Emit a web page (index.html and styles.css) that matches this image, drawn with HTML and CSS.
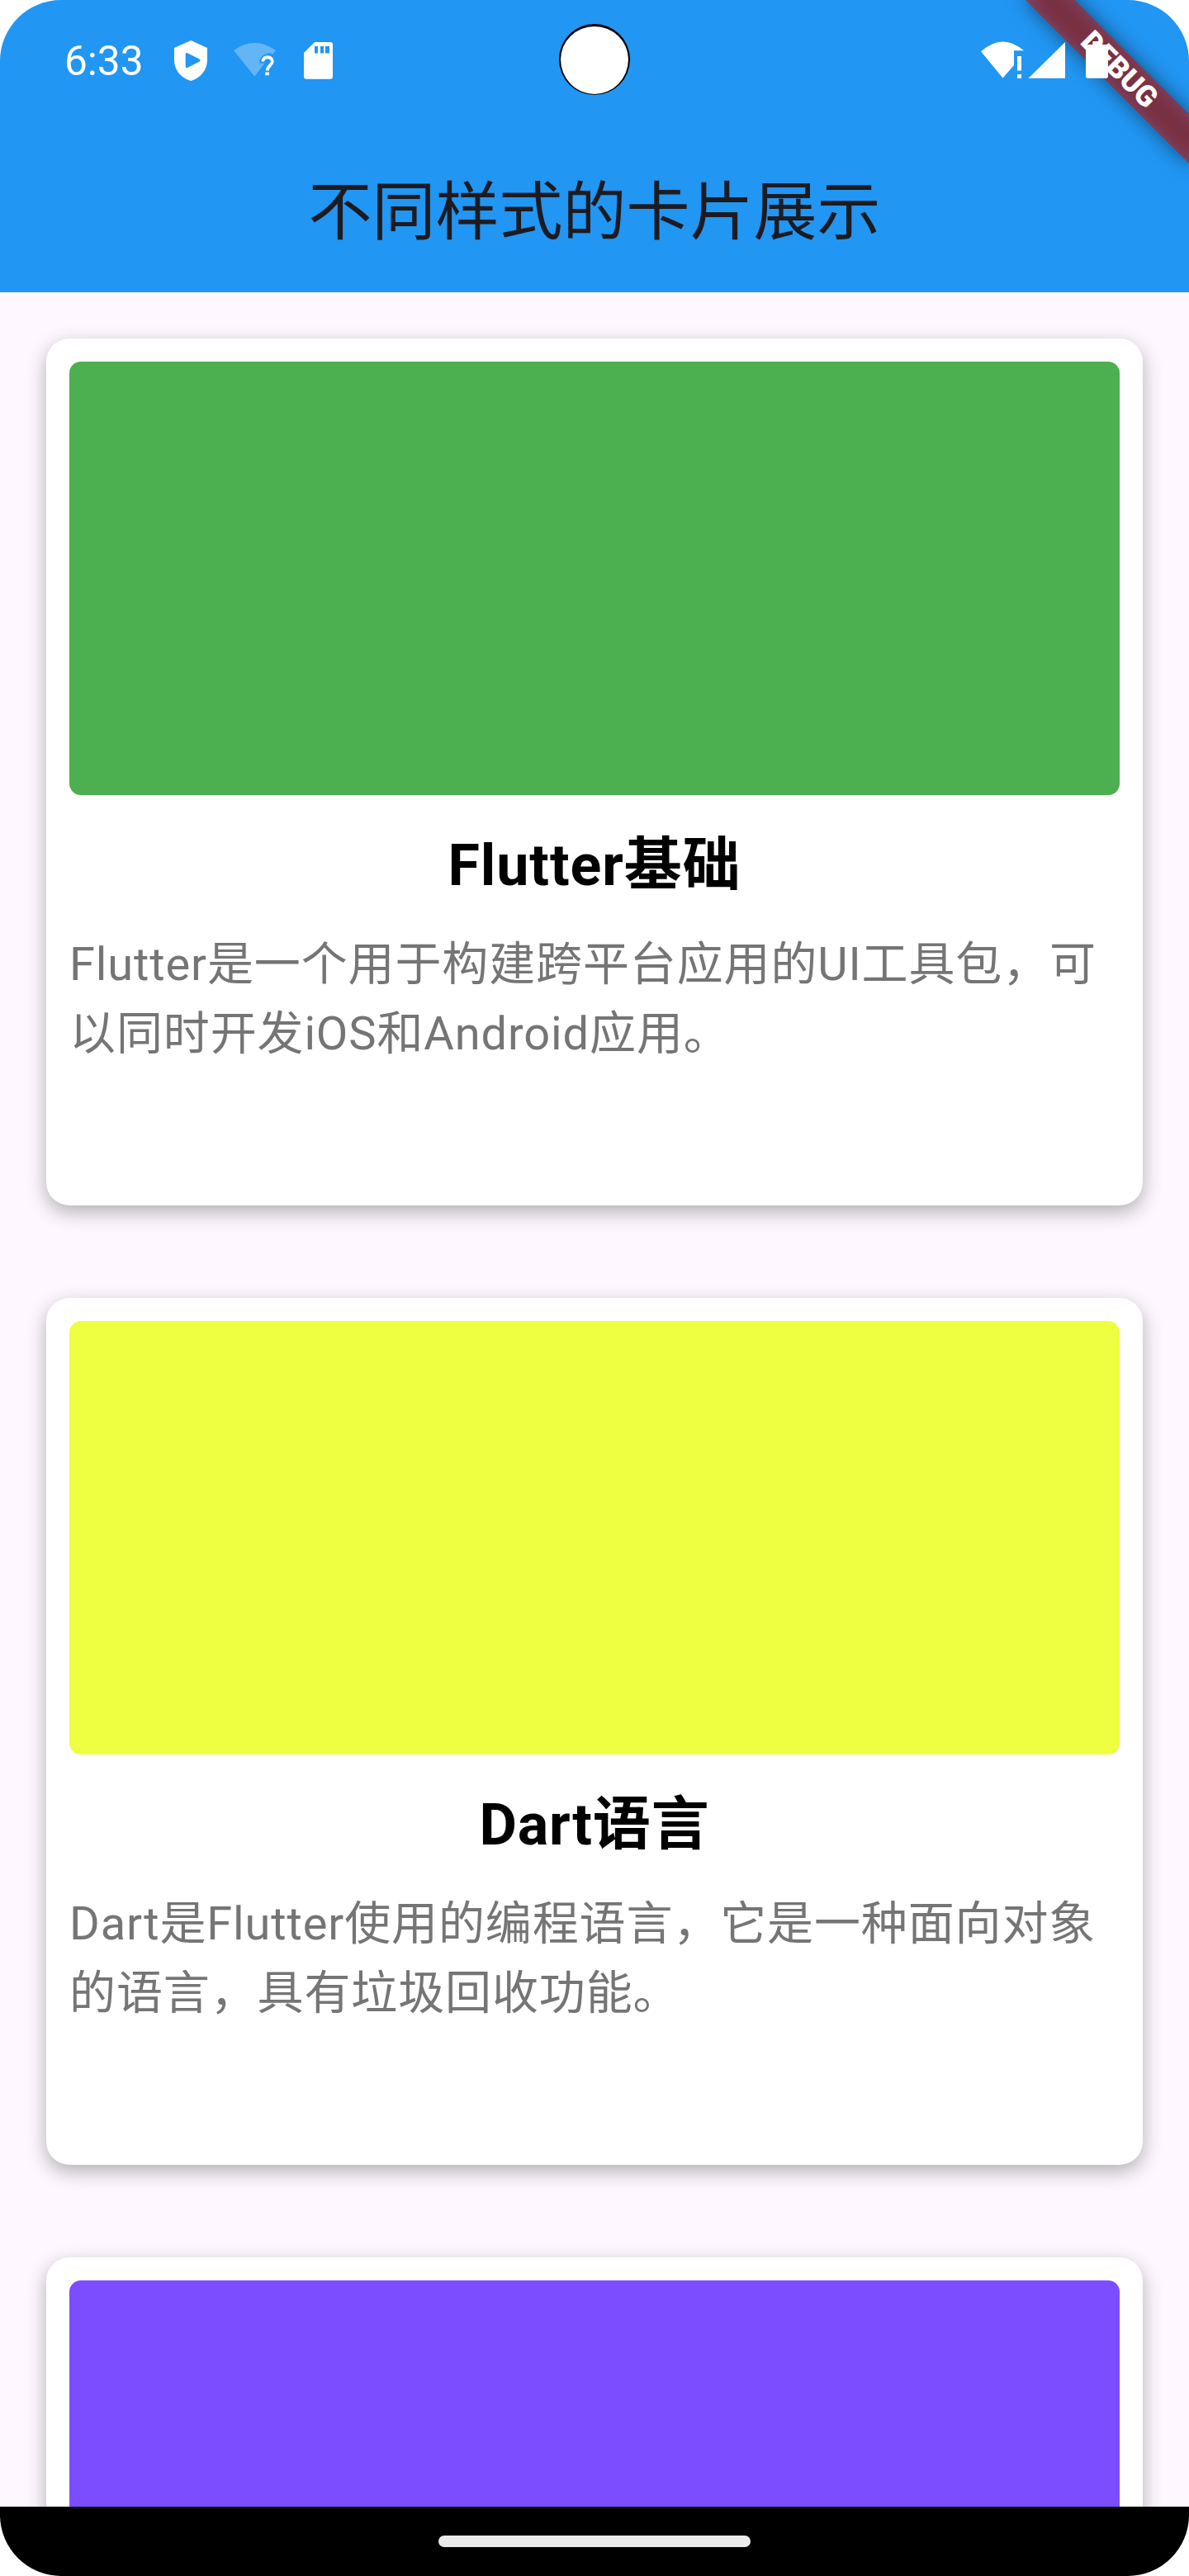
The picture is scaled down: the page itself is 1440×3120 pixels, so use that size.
FILE: index.html
```
<!DOCTYPE html>
<html lang="zh-CN">
<head>
<meta charset="utf-8">
<title>不同样式的卡片展示</title>
<link rel="stylesheet" href="styles.css">
</head>
<body>
<div class="screen">
  <header class="app-bar">
    <div class="status-bar">
      <span class="clock">6:33</span>
      <svg class="status-icons" width="206" height="64" viewBox="204 40 206 64">
        <path fill="#fff" fill-rule="evenodd" d="M231.3 49L251 58V73C251 85 242 95 231.3 98C220 95 211 85 211 73V58ZM227 64.3Q224.700 63.500 224.700 66V80Q224.700 83 227.500 81.800L241.800 74.600Q243.500 73.200 241.800 71.800Z"/>
        <path fill="#fff" fill-opacity=".3" d="M283 61Q308.500 43 334 61L330.500 65.500C323 62 314 68 314 76.500H320.500L308.300 92.500Z"/>
        <path fill="none" stroke="#fff" stroke-width="3.800" d="M318.300 74.500C318.300 67.500 329.800 67.500 329.800 74.500C329.800 79 323.700 79.500 323.700 85.500"/>
        <path fill="#fff" d="M321.300 87.500h4.500v3.700h-4.500z"/>
        <path fill="#fff" fill-rule="evenodd" d="M381 51H400Q403 51 403 54V92.500Q403 95.700 400 95.700H371Q368 95.700 368 92.500V64ZM381 56V64.500H385V56ZM388 56V64.500H392V56ZM394 56V64.500H399V56Z"/>
      </svg>
      <svg class="status-icons system-icons" width="160" height="64" viewBox="1184 40 160 64">
        <path fill="#fff" d="M1188 62.300Q1214 39 1240 61.300H1228V79L1214.500 94.500Z"/>
        <path fill="#fff" d="M1232 68h5v17.500h-5zM1232 90h5v4.800h-5zM1290 51V94.800H1245.500Z"/>
        <path fill="#fff" d="M1323.300 50H1333.500V54H1340Q1342 54 1342 56V92.500Q1342 94.800 1339.700 94.800H1317.300Q1315 94.800 1315 92.500V56Q1315 54 1317 54H1323.300Z"/>
      </svg>
    </div>
    <h1 class="app-title">不同样式的卡片展示</h1>
  </header>
  <main class="card-list">
    <article class="card">
      <div class="cover cover-green"></div>
      <h2 class="card-title">Flutter基础</h2>
      <p class="card-text">Flutter是一个用于构建跨平台应用的UI工具包，可以同时开发iOS和Android应用。</p>
    </article>
    <article class="card">
      <div class="cover cover-lime"></div>
      <h2 class="card-title">Dart语言</h2>
      <p class="card-text">Dart是Flutter使用的编程语言，它是一种面向对象的语言，具有垃圾回收功能。</p>
    </article>
    <article class="card">
      <div class="cover cover-purple"></div>
    </article>
  </main>
  <footer class="nav-bar"><div class="nav-pill"></div></footer>
  <div class="camera"></div>
  <div class="debug-banner"><span class="debug-label">DEBUG</span></div>
</div>
</body>
</html>
```
FILE: styles.css
```
* { box-sizing: border-box; }
body {
  margin: 0;
  background: #fff;
  font-family: Roboto, "Noto Sans CJK SC", sans-serif;
}
.screen {
  position: relative;
  display: flex;
  flex-direction: column;
  width: 1440px;
  height: 3120px;
  overflow: hidden;
  border-radius: 74px;
  background: #fef7ff;
}
.app-bar {
  flex: none;
  height: 354px;
  background: #2196f3;
}
.status-bar {
  display: flex;
  align-items: flex-start;
  height: 158px;
  padding: 40px 96px 0 78px;
}
.clock {
  width: 126px;
  padding-top: 5px;
  font-size: 49.5px;
  line-height: 58px;
  color: #fff;
}
/* System icons stay above the debug banner. */
.status-icons {
  position: relative;
  z-index: 2;
  flex: none;
}
.system-icons { margin-left: auto; }
.app-title {
  margin: 0;
  padding-top: 2px;
  font-size: 77px;
  font-weight: 400;
  line-height: 194px;
  padding-top: 3px;
  height: 196px;
  text-align: center;
  color: #1d1b20;
}
.card-list {
  flex: 1;
  min-height: 0;
  display: flex;
  flex-direction: column;
  gap: 112px;
  padding: 56px 56px 0;
  overflow: hidden;
}
.card {
  flex: none;
  height: 1050px;
  padding: 28px;
  border-radius: 28px;
  background: #fff;
  box-shadow: 0 8px 23px rgba(0, 0, 0, .3);
}
.cover {
  height: 525px;
  border-radius: 14px;
}
.cover-green { background: #4caf50; }
.cover-lime { background: #eeff41; }
.cover-purple { background: #7c4dff; }
.card-title {
  margin: 35px 0 28px;
  font-size: 70px;
  font-weight: 700;
  line-height: 100px;
  letter-spacing: .875px;
  text-align: center;
  color: #000;
}
.card-text {
  margin: 0;
  font-size: 56px;
  line-height: 84px;
  letter-spacing: .875px;
  color: #757575;
}
.nav-bar {
  position: relative;
  flex: none;
  display: flex;
  justify-content: center;
  height: 84px;
  padding-top: 35px;
  background: #000;
}
.nav-pill {
  width: 378px;
  height: 14px;
  border-radius: 7px;
  background: #ebebeb;
}
.camera {
  position: absolute;
  top: 29px;
  left: 677px;
  width: 86px;
  height: 86px;
  border: solid #000;
  border-width: 3px 2px 1px;
  border-radius: 50%;
  background: #fff;
}
.debug-banner {
  position: absolute;
  top: 98px;
  left: 1300px;
  z-index: 1;
  width: 280px;
  height: 42px;
  transform: rotate(45deg);
  transform-origin: 140px -98px;
  text-align: center;
}
.debug-banner::before,
.debug-banner::after {
  content: "";
  position: absolute;
  inset: 0;
}
.debug-banner::before {
  background: rgba(0, 0, 0, .5);
  filter: blur(12.5px);
}
.debug-banner::after { background: rgba(183, 28, 28, .627); }
.debug-label {
  position: relative;
  z-index: 1;
  font-size: 35.7px;
  font-weight: 900;
  line-height: 42px;
  color: #fff;
}
```
